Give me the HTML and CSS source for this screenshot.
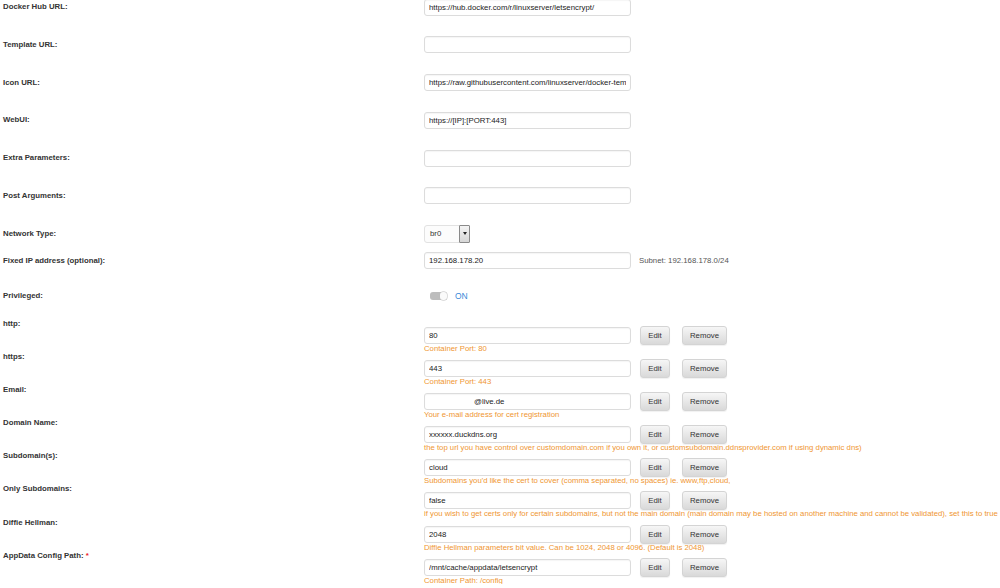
FILE: index.html
```html
<!DOCTYPE html>
<html>
<head>
<meta charset="utf-8">
<link rel="stylesheet" href="styles.css">
</head>
<body>
<div class="form">
  <div class="row"><div class="label">Docker Hub URL:</div><div class="field"><input class="text" value="https://hub.docker.com/r/linuxserver/letsencrypt/"></div></div>
  <div class="row"><div class="label">Template URL:</div><div class="field"><input class="text" value=""></div></div>
  <div class="row"><div class="label">Icon URL:</div><div class="field"><input class="text" value="https://raw.githubusercontent.com/linuxserver/docker-templates/master/linuxserver.io/img/letsencrypt-icon.png"></div></div>
  <div class="row"><div class="label">WebUI:</div><div class="field"><input class="text" value="https://[IP]:[PORT:443]"></div></div>
  <div class="row"><div class="label">Extra Parameters:</div><div class="field"><input class="text" value=""></div></div>
  <div class="row"><div class="label">Post Arguments:</div><div class="field"><input class="text" value=""></div></div>
  <div class="row"><div class="label">Network Type:</div><div class="field"><div class="select"><span class="sel-val">br0</span><span class="sel-btn"><span class="tri"></span></span></div></div></div>
  <div class="row tight"><div class="label">Fixed IP address (optional):</div><div class="field"><input class="text" value="192.168.178.20"><span class="subnet">Subnet: 192.168.178.0/24</span></div></div>
  <div class="row priv"><div class="label">Privileged:</div><div class="field"><span class="switch"><span class="knob"></span></span><span class="on">ON</span></div></div>

  <div class="prow"><div class="label">http:</div><div class="pfield"><div class="line"><input class="text" value="80"><button class="btn edit">Edit</button><button class="btn remove">Remove</button></div><div class="help">Container Port: 80</div></div></div>
  <div class="prow"><div class="label">https:</div><div class="pfield"><div class="line"><input class="text" value="443"><button class="btn edit">Edit</button><button class="btn remove">Remove</button></div><div class="help">Container Port: 443</div></div></div>
  <div class="prow"><div class="label">Email:</div><div class="pfield"><div class="line"><input class="text indent" value="@live.de"><button class="btn edit">Edit</button><button class="btn remove">Remove</button></div><div class="help">Your e-mail address for cert registration</div></div></div>
  <div class="prow"><div class="label">Domain Name:</div><div class="pfield"><div class="line"><input class="text" value="xxxxxx.duckdns.org"><button class="btn edit">Edit</button><button class="btn remove">Remove</button></div><div class="help">the top url you have control over customdomain.com if you own it, or customsubdomain.ddnsprovider.com if using dynamic dns)</div></div></div>
  <div class="prow"><div class="label">Subdomain(s):</div><div class="pfield"><div class="line"><input class="text" value="cloud"><button class="btn edit">Edit</button><button class="btn remove">Remove</button></div><div class="help">Subdomains you'd like the cert to cover (comma separated, no spaces) ie. www,ftp,cloud,</div></div></div>
  <div class="prow"><div class="label">Only Subdomains:</div><div class="pfield"><div class="line"><input class="text" value="false"><button class="btn edit">Edit</button><button class="btn remove">Remove</button></div><div class="help">if you wish to get certs only for certain subdomains, but not the main domain (main domain may be hosted on another machine and cannot be validated), set this to true</div></div></div>
  <div class="prow"><div class="label">Diffie Hellman:</div><div class="pfield"><div class="line"><input class="text" value="2048"><button class="btn edit">Edit</button><button class="btn remove">Remove</button></div><div class="help">Diffie Hellman parameters bit value. Can be 1024, 2048 or 4096. (Default is 2048)</div></div></div>
  <div class="prow"><div class="label">AppData Config Path: <span class="req">*</span></div><div class="pfield"><div class="line"><input class="text" value="/mnt/cache/appdata/letsencrypt"><button class="btn edit">Edit</button><button class="btn remove">Remove</button></div><div class="help">Container Path: /config</div></div></div>
</div>
</body>
</html>
```

FILE: styles.css
```css
html, body {
  margin: 0;
  padding: 0;
  background: #fff;
  overflow: hidden;
}
body {
  font-family: "Liberation Sans", Arial, sans-serif;
  font-size: 7.8px;
  color: #333;
}
.form {
  margin-top: -11.9px;
  padding-left: 3px;
}
.row {
  display: flex;
  align-items: center;
  height: 37.8px;
}
.row.tight {
  height: 16px;
}
.row.priv {
  height: 44.7px;
  padding-top: 5.4px;
}
.label {
  width: 421px;
  flex: none;
  font-weight: bold;
  color: #333;
  line-height: 10px;
  white-space: nowrap;
}
.req {
  color: #e22;
}
.field {
  display: flex;
  align-items: center;
}
.text {
  box-sizing: border-box;
  width: 207px;
  height: 17px;
  margin: 0;
  padding: 0 4px;
  border: 1px solid #dcdcdc;
  border-radius: 3px;
  background: #fff;
  font-family: "Liberation Sans", Arial, sans-serif;
  font-size: 7.8px;
  color: #222;
  box-shadow: inset 0 1px 1px rgba(0,0,0,0.04);
  outline: none;
}
.text.indent {
  text-indent: 45px;
}
.subnet {
  margin-left: 8px;
  color: #555;
}
.select {
  box-sizing: border-box;
  width: 46px;
  height: 18px;
  border: 1px solid #e2e2e2;
  border-radius: 3px;
  display: flex;
  align-items: center;
  justify-content: space-between;
  background: #fcfcfc;
}
.sel-val {
  padding-left: 5px;
  color: #333;
}
.sel-btn {
  box-sizing: border-box;
  width: 11px;
  height: 18px;
  margin-right: -1px;
  border: 1px solid #8a8a8a;
  border-radius: 1px;
  background: linear-gradient(#f4f4f4, #d6d6d6);
  display: flex;
  align-items: center;
  justify-content: center;
}
.tri {
  width: 0;
  height: 0;
  border-left: 2.5px solid transparent;
  border-right: 2.5px solid transparent;
  border-top: 3px solid #222;
}
.switch {
  margin-left: 6px;
  position: relative;
  width: 17px;
  height: 8px;
  border-radius: 3px;
  background: #bdbdbd;
  display: inline-block;
}
.knob {
  position: absolute;
  right: 0;
  top: 0;
  width: 7px;
  height: 8px;
  border-radius: 3px;
  background: #fafafa;
  box-shadow: 0 0 0 0.5px #bbb;
}
.on {
  margin-left: 8px;
  color: #3b8ad8;
  font-size: 8.5px;
}
.prow {
  display: flex;
  align-items: flex-start;
  height: 33.14px;
}
.pfield {
  padding-top: 7px;
}
.line {
  display: flex;
  align-items: center;
  height: 19px;
}
.btn {
  box-sizing: border-box;
  height: 19px;
  margin: 0;
  padding: 0;
  border: 1px solid #d4d4d4;
  border-radius: 3px;
  background: linear-gradient(#f6f6f6, #d9d9d9);
  font-family: "Liberation Sans", Arial, sans-serif;
  font-size: 7.8px;
  color: #333;
  box-shadow: 0 1px 1px rgba(0,0,0,0.06);
}
.btn.edit {
  width: 30px;
  margin-left: 9px;
}
.btn.remove {
  width: 45px;
  margin-left: 12px;
}
.help {
  margin-top: -1px;
  line-height: 10px;
  font-size: 7.75px;
  color: #ef9632;
  white-space: nowrap;
}
```
